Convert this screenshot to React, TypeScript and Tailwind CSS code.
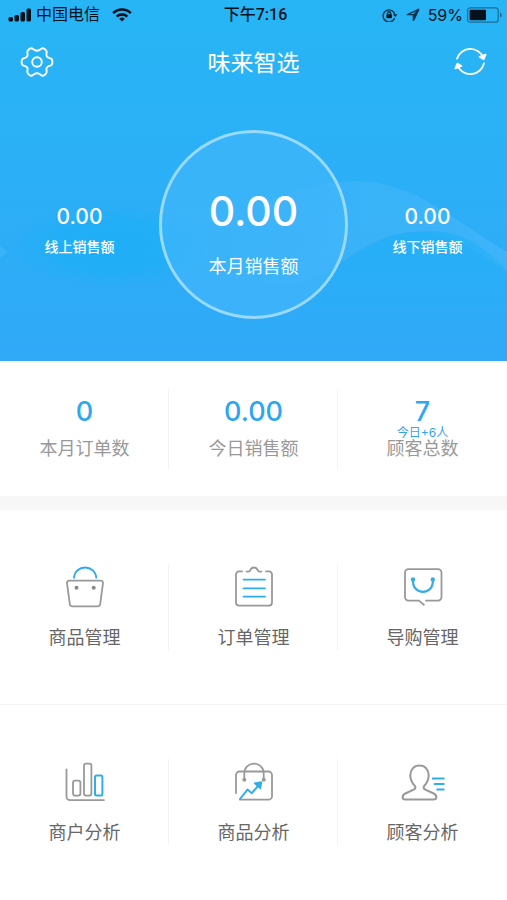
// 味来智选 商家首页：销售概览 + 功能入口
import type { ReactNode } from "react";

const STATS = [
  { label: "本月订单数", value: "0" },
  { label: "今日销售额", value: "0.00" },
  { label: "顾客总数", value: "7", note: "今日+6人" },
];

function SignalIcon() {
  return (
    <svg width="24" height="14" viewBox="0 0 24 14" fill="#06121b">
      <rect x="0.500" y="9" width="4.500" height="4.500" rx="1.500" />
      <rect x="6.500" y="7" width="4.500" height="6.500" rx="1.500" />
      <rect x="12.500" y="4" width="4.500" height="9.500" rx="1.500" />
      <rect x="18.500" y="0.500" width="4.500" height="13" rx="1.500" />
    </svg>
  );
}

function WifiIcon() {
  return (
    <svg width="20" height="14" viewBox="0 0 20 14" fill="none" stroke="#06121b" strokeWidth="2.6">
      <path d="M1.2 5.2a12.4 12.4 0 0 1 17.6 0" />
      <path d="M4.6 8.6a7.6 7.6 0 0 1 10.8 0" />
      <path d="M10 13.6 7.2 10.8a4 4 0 0 1 5.6 0Z" fill="#06121b" stroke="none" />
    </svg>
  );
}

function LockIcon() {
  return (
    <svg width="16" height="14" viewBox="0 0 16 14" fill="none" stroke="#0b3450" strokeWidth="1.4">
      <path d="M12.6 10.2A6 6 0 1 1 13 7" />
      <path d="M10.8 6.2h4.8L13.2 9Z" fill="#0b3450" stroke="none" />
      <rect x="4.4" y="6.2" width="5.4" height="4" fill="#06121b" stroke="none" />
      <path d="M5.6 6.4V5.2a1.5 1.5 0 0 1 3 0v1.2" />
    </svg>
  );
}

function LocationIcon() {
  return (
    <svg width="14" height="14" viewBox="0 0 14 14" fill="none" stroke="#0b3450" strokeWidth="1.4" strokeLinejoin="round">
      <path d="M12.6 1.4 1.4 6.6h6v5.8Z" />
      <path d="M12.6 1.4 8 6.4v5Z" fill="#0b3450" />
    </svg>
  );
}

function BatteryIcon() {
  return (
    <svg width="36" height="16" viewBox="0 0 36 16" fill="none">
      <rect x="0.6" y="0.8" width="30.6" height="14.4" rx="2.8" stroke="#1a6c98" strokeWidth="1.2" />
      <rect x="2.6" y="2.8" width="16.4" height="10.4" rx="1" fill="#06121b" />
      <path d="M33 5.4c2.2.6 2.2 4.6 0 5.2Z" fill="#1a6c98" />
    </svg>
  );
}

function SettingsIcon() {
  return (
    <svg width="34" height="32" viewBox="0 0 34 32" fill="none" stroke="#fff" strokeWidth="1.9" strokeLinejoin="round">
      <path d="M7.8 4.6C9.6 2.4 11.4 1.6 13 3c2.4 2 5.6 2 8 0 1.600-1.400 3.400-.6 5.200 1.600 1 1.400.4 2.400.2 3.600-.2 2.200 1.400 3.800 4 4.200 1.400.2 2 1.400 2 3.600s-.6 3.400-2 3.600c-2.600.4-4.200 2-4 4.200.2 1.200.8 2.200-.2 3.600-1.800 2.200-3.600 3-5.200 1.600-2.400-2-5.600-2-8 0-1.600 1.400-3.400.6-5.200-1.600-1-1.400-.4-2.400-.2-3.600.2-2.200-1.400-3.800-4-4.200-1.400-.2-2-1.400-2-3.600s.6-3.400 2-3.600c2.600-.4 4.200-2 4-4.200C7.400 7 6.800 6 7.800 4.600Z" />
      <circle cx="17" cy="16" r="4.800" />
    </svg>
  );
}

function RefreshIcon() {
  return (
    <svg width="34" height="32" viewBox="0 0 34 32" fill="none" stroke="#fff" strokeWidth="1.8" strokeLinecap="round" strokeLinejoin="round">
      <path d="M4 12.600A14 14 0 0 1 30.400 12" />
      <path d="M31 17.400A14 14 0 0 1 4.600 19.800" />
      <path d="m26.600 10.800 4 2.400 2-4.600Z" fill="#fff" />
      <path d="m8.400 20-4-2.400-2 4.800Z" fill="#fff" />
    </svg>
  );
}

function GoodsIcon() {
  return (
    <svg width="40" height="42" viewBox="0 0 40 42" fill="none" stroke="#999" strokeWidth="1.8">
      <path d="M9 12.500C9.400-2.200 30.600-2.200 31.400 12.500" stroke="#2cabf0" />
      <path d="M4.400 14.600h31.200c1.600 0 2.600 1 2.400 2.600L35.200 38c-.2 1.600-1.200 2.400-2.800 2.400H7.600c-1.600 0-2.600-.8-2.800-2.400L2 17.200c-.2-1.600.8-2.600 2.400-2.600Z" />
      <circle cx="11.500" cy="21.800" r="2" fill="#888" stroke="none" />
      <circle cx="28.700" cy="21.800" r="2" fill="#888" stroke="none" />
    </svg>
  );
}

function OrderIcon() {
  return (
    <svg width="40" height="42" viewBox="0 0 40 42" fill="none" stroke="#999" strokeWidth="1.8" strokeLinecap="round">
      <path d="M8 5.400H5A3 3 0 0 0 2 8.400V36.600A3 3 0 0 0 5 39.600H35A3 3 0 0 0 38 36.600V8.400A3 3 0 0 0 35 5.400H32" />
      <path d="M12.500 5.600h2c1 0 1.400-.4 1.800-1.400 1.600-3.600 5.800-3.600 7.400 0 .4 1 .8 1.400 1.800 1.400h2" />
      <path d="M9.500 13.600h21.500M9.500 22.400h21.500M9.500 30.600h21.500" stroke="#2cabf0" />
    </svg>
  );
}

function GuideIcon() {
  return (
    <svg width="40" height="42" viewBox="0 0 40 42" fill="none" stroke="#999" strokeWidth="1.8" strokeLinecap="round" strokeLinejoin="round">
      <path d="M23 34.600h12a3.500 3.500 0 0 0 3.500-3.500V6.700a3.500 3.500 0 0 0-3.500-3.500H5.500A3.500 3.500 0 0 0 2 6.700v24.400a3.500 3.500 0 0 0 3.500 3.500H16l4.800 4.200" />
      <path d="M10 13.500c-1.400 16.400 21.400 16.400 19.800 0" stroke="#35ade8" strokeWidth="2.200" />
      <circle cx="10" cy="13.500" r="2.200" fill="#35ade8" stroke="none" />
      <circle cx="29.800" cy="13.500" r="2.200" fill="#35ade8" stroke="none" />
    </svg>
  );
}

function MerchantIcon() {
  return (
    <svg width="40" height="42" viewBox="0 0 40 42" fill="none" stroke="#999" strokeWidth="1.800" strokeLinecap="round">
      <path d="M1.500 8.500V35.600A3.500 3.500 0 0 0 5 39.100H39" />
      <rect x="8" y="19.600" width="7.400" height="15" rx="2" />
      <rect x="19" y="2.600" width="7.400" height="32" rx="2" />
      <rect x="30" y="14.600" width="7.400" height="20" rx="1.500" stroke="#2fafe6" strokeWidth="2" />
    </svg>
  );
}

function GoodsTrendIcon() {
  return (
    <svg width="40" height="42" viewBox="0 0 40 42" fill="none" stroke="#999" strokeWidth="1.800" strokeLinecap="round" strokeLinejoin="round">
      <path d="M2 32V14a3.500 3.500 0 0 1 3.500-3.500h29A3.500 3.500 0 0 1 38 14v21.200a3.500 3.500 0 0 1-3.500 3.500H6" />
      <path d="M10.300 18.500V12.500c0-13.200 19.400-13.200 19.400 0v6" />
      <circle cx="10.300" cy="18.800" r="2" fill="#999" stroke="none" />
      <circle cx="29.700" cy="18.800" r="2" fill="#999" stroke="none" />
      <path d="m6 38 7.500-9.400 4.300 3.600 7.800-9" stroke="#2fafe6" strokeWidth="2" />
      <path d="m20.500 22.300 7-1.300-1 6.500Z" fill="#2fafe6" stroke="#2fafe6" strokeWidth="1.400" />
    </svg>
  );
}

function CustomerIcon() {
  return (
    <svg width="44" height="42" viewBox="0 0 44 42" fill="none" stroke="#999" strokeWidth="2" strokeLinejoin="round">
      <path d="M18.500 4.500c-5.600 0-9.200 4.200-9.200 10 0 4.200 1.800 7.400 4.200 10 1.400 1.600 1.200 3-.8 4.200l-8.400 3.800C.8 34.400.6 38.600 4.600 38.600h27.800c4 0 3.800-4.200.3-6.100l-8.400-3.800c-2-1.200-2.200-2.600-.8-4.200 2.400-2.600 4.200-5.800 4.200-10 0-5.800-3.600-10-9.200-10Z" />
      <path d="M31 17.400h12.500M33 23h10.500M35.500 28.600h8" stroke="#2fafe6" />
    </svg>
  );
}

const MENU_ROWS: { label: string; icon: ReactNode }[][] = [
  [
    { label: "商品管理", icon: <GoodsIcon /> },
    { label: "订单管理", icon: <OrderIcon /> },
    { label: "导购管理", icon: <GuideIcon /> },
  ],
  [
    { label: "商户分析", icon: <MerchantIcon /> },
    { label: "商品分析", icon: <GoodsTrendIcon /> },
    { label: "顾客分析", icon: <CustomerIcon /> },
  ],
];

function StatusBar() {
  return (
    <div className="grid h-[30px] grid-cols-[1fr_auto_1fr] items-center pl-2 pr-1 text-base leading-6 text-[#06121b]">
      <div className="flex items-center gap-1">
        <SignalIcon />
        <span>中国电信</span>
        <span className="pl-2">
          <WifiIcon />
        </span>
      </div>
      <span className="font-medium">下午7:16</span>
      <div className="flex items-center justify-end gap-1">
        <span className="flex items-center gap-2">
          <LockIcon />
          <LocationIcon />
          <span className="font-['Inter']">59%</span>
        </span>
        <BatteryIcon />
      </div>
    </div>
  );
}

// 头部背景的波浪
function Waves() {
  return (
    <svg className="absolute inset-0 h-full w-full" viewBox="0 0 507 361" preserveAspectRatio="none" fill="none">
      <defs>
        <linearGradient id="crest" x1="220" y1="0" x2="507" y2="0" gradientUnits="userSpaceOnUse">
          <stop offset="0" stopColor="#5abfff" stopOpacity="0" />
          <stop offset="0.5" stopColor="#5abfff" stopOpacity="0.28" />
          <stop offset="1" stopColor="#5abfff" stopOpacity="0.36" />
        </linearGradient>
        <radialGradient id="pool" cx="115" cy="246" r="1" gradientUnits="userSpaceOnUse" gradientTransform="translate(115 246) scale(105 42) translate(-115 -246)">
          <stop offset="0" stopColor="#1daff6" stopOpacity="0.9" />
          <stop offset="0.6" stopColor="#1daff6" stopOpacity="0.7" />
          <stop offset="1" stopColor="#1daff6" stopOpacity="0" />
        </radialGradient>
        <linearGradient id="swell" x1="0" y1="231" x2="0" y2="330" gradientUnits="userSpaceOnUse">
          <stop offset="0" stopColor="#23b0f6" stopOpacity="0.8" />
          <stop offset="1" stopColor="#23b0f6" stopOpacity="0" />
        </linearGradient>
      </defs>
      <path d="M200 231C260 200 310 181 355 181C415 181 455 222 507 252V272C440 222 400 218 340 264C300 292 240 292 200 260Z" fill="url(#crest)" />
      <ellipse cx="115" cy="246" rx="105" ry="42" fill="url(#pool)" />
      <path d="M330 272C365 243 400 231 430 231C465 231 485 248 507 270V340H290Z" fill="url(#swell)" />
      <path d="M0 246 7 252 0 258Z" fill="#5abfff" fillOpacity="0.3" />
    </svg>
  );
}

function SideSales({ value, label }: { value: string; label: string }) {
  return (
    <div className="flex flex-1 flex-col items-center gap-1 pt-3">
      <span className="font-['Inter'] text-[21px] font-medium leading-7">{value}</span>
      <span className="text-sm font-medium leading-6">{label}</span>
    </div>
  );
}

function Divider() {
  return <span className="absolute inset-y-0 right-0 w-px bg-[#f3f3f3]" />;
}

export default function App() {
  return (
    <div className="min-h-screen bg-white font-['Roboto','Noto_Sans_CJK_SC',sans-serif]">
      <header className="relative bg-linear-to-b from-[#27b5f5] to-[#30a9f7] pb-[42px] text-white">
        <Waves />
        <div className="relative">
          <StatusBar />
          <nav className="flex h-16 items-center justify-between px-5">
            <button type="button" aria-label="设置">
              <SettingsIcon />
            </button>
            <h1 className="pt-1 text-[23px] leading-8">味来智选</h1>
            <button type="button" aria-label="刷新">
              <RefreshIcon />
            </button>
          </nav>
          <div className="flex items-center pt-9">
            <SideSales value="0.00" label="线上销售额" />
            <div className="flex size-[189px] shrink-0 flex-col items-center justify-center gap-2 rounded-full border-3 border-[#98dafc] bg-[#44b8fb]/60 pt-4">
              <span className="font-['Inter'] text-[41px] font-medium leading-[56px]">0.00</span>
              <span className="pt-1 text-lg leading-8">本月销售额</span>
            </div>
            <SideSales value="0.00" label="线下销售额" />
          </div>
        </div>
      </header>

      <section className="grid grid-cols-3 border-b-[14px] border-[#f7f7f7] pb-[26px] pt-7 text-center">
        {STATS.map((s, i) => (
          <div key={s.label} className="relative h-[81px] pt-2">
            <div className="font-['Inter'] text-[27px] font-medium leading-[30px] text-[#2ea7ee]">{s.value}</div>
            {s.note && (
              <div className="absolute inset-x-0 top-9 font-['Inter','Noto_Sans_CJK_SC',sans-serif] text-xs leading-4 text-[#2ea7ee]">{s.note}</div>
            )}
            <div className="pt-2 text-lg leading-7 text-[#999]">{s.label}</div>
            {i < 2 && <Divider />}
          </div>
        ))}
      </section>

      <main>
        {MENU_ROWS.map((row) => (
          <div key={row[0].label} className="grid grid-cols-3 border-b border-[#f3f3f3] py-[54px] last:border-0">
            {row.map((item, i) => (
              <button key={item.label} type="button" className="relative flex h-[86px] flex-col items-center justify-between pt-[2px]">
                {item.icon}
                <span className="text-lg leading-6 text-[#666]">{item.label}</span>
                {i < 2 && <Divider />}
              </button>
            ))}
          </div>
        ))}
      </main>
    </div>
  );
}
